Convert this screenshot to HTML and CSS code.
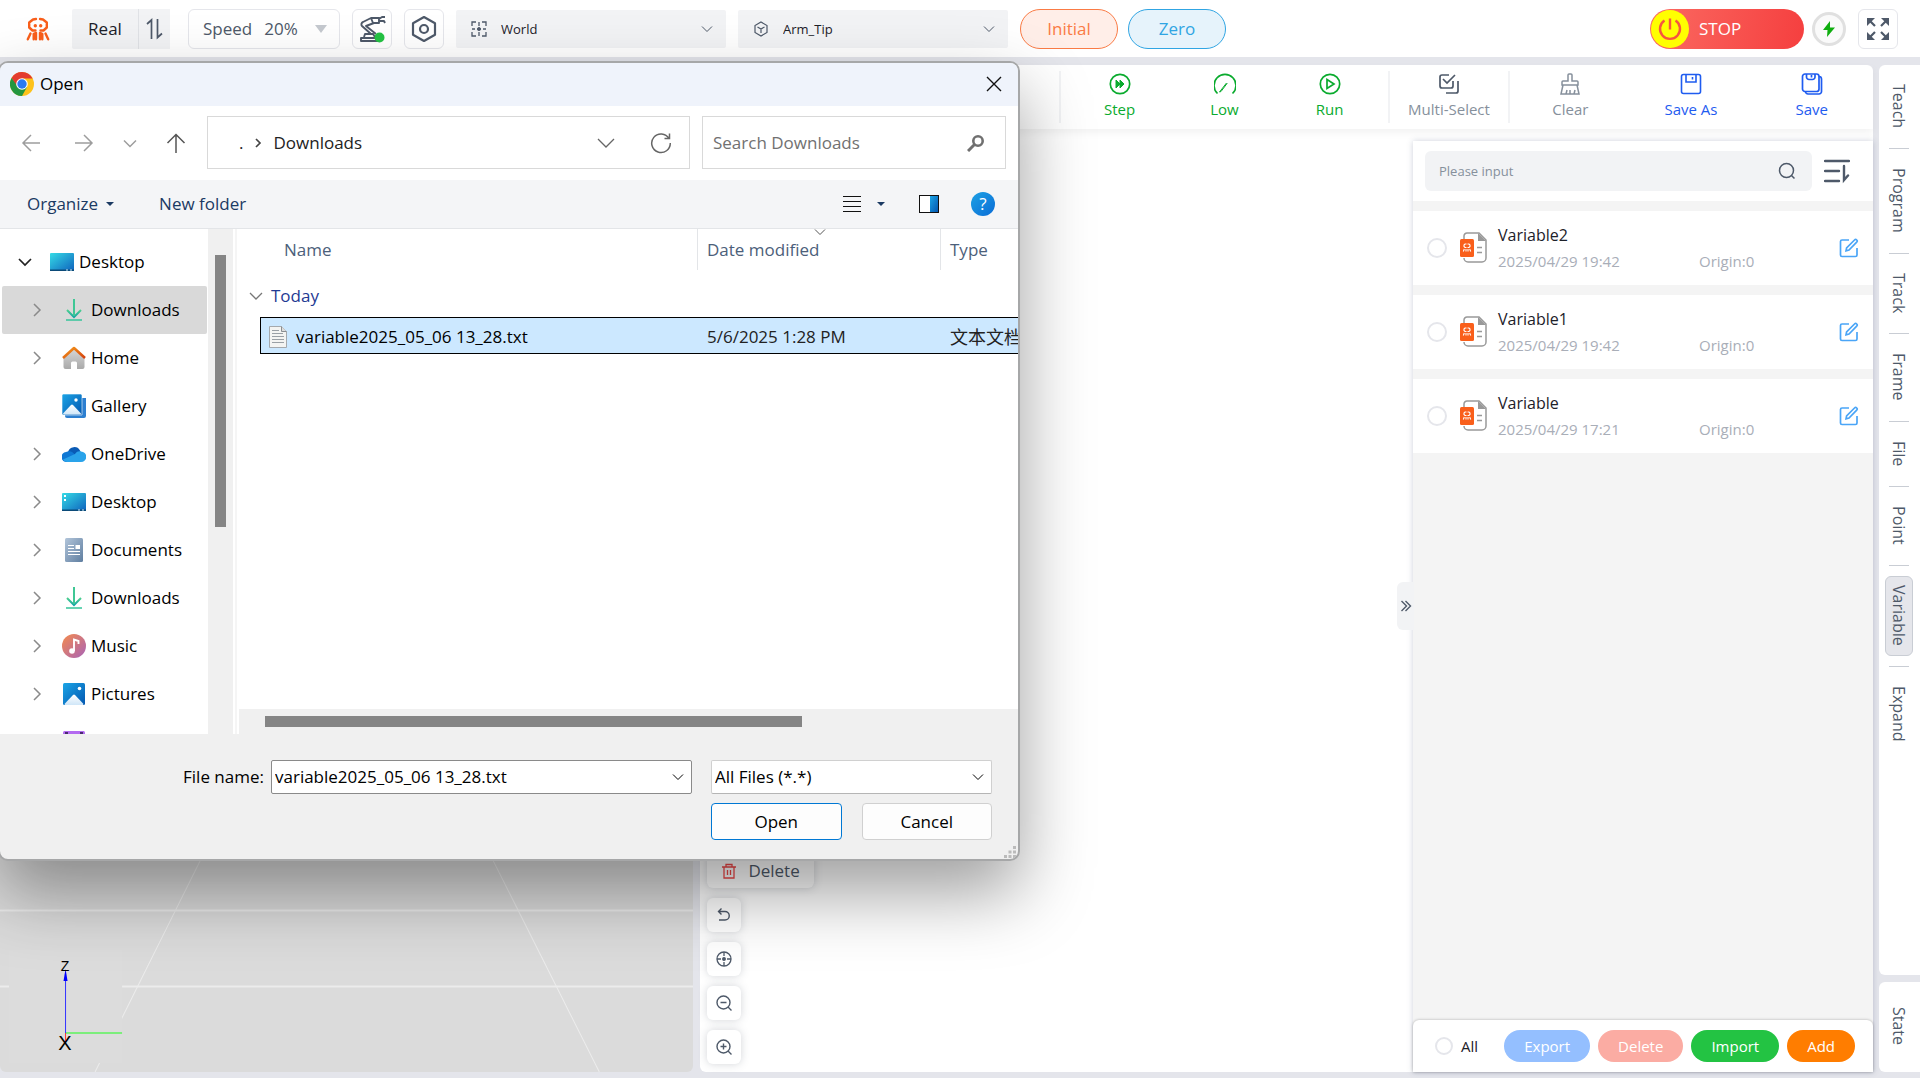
FILE: index.html
```html
<!DOCTYPE html>
<html lang="en">
<head>
<meta charset="utf-8">
<title>Robot Studio</title>
<link rel="stylesheet" href="styles.css">
</head>
<body>
<svg class="defs" aria-hidden="true">
  <defs>
    <linearGradient id="g-desk" x1="0" y1="0" x2="1" y2="1"><stop offset="0" stop-color="#35dbe6"/><stop offset="1" stop-color="#0f62bd"/></linearGradient>
    <linearGradient id="g-down" x1="0" y1="0" x2="0" y2="1"><stop offset="0" stop-color="#4fd08f"/><stop offset="1" stop-color="#12a5a5"/></linearGradient>
    <linearGradient id="g-roof" x1="0" y1="0" x2="1" y2="1"><stop offset="0" stop-color="#f59a1b"/><stop offset="1" stop-color="#d4400e"/></linearGradient>
    <linearGradient id="g-wall" x1="0" y1="0" x2="0" y2="1"><stop offset="0" stop-color="#d8d8d8"/><stop offset="1" stop-color="#a9a9a9"/></linearGradient>
    <linearGradient id="g-pic" x1="0" y1="0" x2="1" y2="1"><stop offset="0" stop-color="#1ba5e6"/><stop offset="1" stop-color="#0356b0"/></linearGradient>
    <linearGradient id="g-hill" x1="0" y1="0" x2="0" y2="1"><stop offset="0" stop-color="#ffffff"/><stop offset="1" stop-color="#cfe6f8"/></linearGradient>
    <linearGradient id="g-doc" x1="0" y1="0" x2="1" y2="1"><stop offset="0" stop-color="#b2c5da"/><stop offset="1" stop-color="#5f7ea0"/></linearGradient>
    <linearGradient id="g-music" x1="0" y1="0" x2="1" y2="1"><stop offset="0" stop-color="#f58b4c"/><stop offset="1" stop-color="#a863b8"/></linearGradient>
  </defs>
  <symbol id="i-down" viewBox="0 0 14 14"><path d="M2 4.500l5 5 5-5" fill="none" stroke="currentColor"/></symbol>
  <symbol id="i-right" viewBox="0 0 10 16"><path d="M2 2l6 6-6 6" fill="none" stroke="currentColor" stroke-width="1.500"/></symbol>
  <symbol id="i-logo" viewBox="0 0 24 24">
    <g fill="none" stroke="currentColor" stroke-width="2.400" stroke-linecap="round" stroke-linejoin="round">
      <path d="M10 2L7 2.500 3.200 5.500V10.500L6.500 13.500H9.500"/><path d="M14 2L17 2.500 20.800 5.500V10.500L17.500 13.500H14.500"/>
      <path d="M4.500 16.500L1.800 22.300M19.500 16.500L22.200 22.300M7.700 22.300V16.800L10 16V22.300M16.300 22.300V16.800L14 16V22.300"/>
    </g><circle cx="9.300" cy="8.800" r="1.700" fill="currentColor"/><circle cx="14.700" cy="8.800" r="1.700" fill="currentColor"/>
  </symbol>
  <symbol id="i-download" viewBox="0 0 24 24"><path d="M5 12l7 7 7-7" fill="none" stroke="url(#g-down)" stroke-width="2"/><rect x="11" y="1" width="2" height="17" fill="#3fc795"/><path d="M4 22h16" stroke="#35c49a" stroke-width="1.500"/></symbol>
  <symbol id="i-file" viewBox="0 0 28 32">
    <path d="M4 8V4a3 3 0 0 1 3-3h12l7 7v18a4 4 0 0 1-4 4H8a4 4 0 0 1-4-4" fill="#fff" stroke="#999" stroke-width="1.500"/>
    <path d="M18 1l8 8h-8z" fill="#999"/><path d="M17 15.500h5M17 20.500h5" stroke="#999" stroke-width="1.500"/>
    <rect x="0" y="7" width="14" height="18" rx="1.500" fill="#f95f1b"/>
    <g fill="none" stroke="#fff" stroke-width="1.100"><path d="M6.500 12H5l-1 1v1.500l1 1h1.500M7.500 12H9l1 1v1.500l-1 1H7.500M3.300 19.500l1-2.500M10.700 19.500l-1-2.500M6 19.500V17M8 19.500V17"/></g>
  </symbol>
  <symbol id="i-edit" viewBox="0 0 20 20"><path d="M10 2H3a1.500 1.500 0 0 0-1.500 1.500V17A1.500 1.500 0 0 0 3 18.500h13.500A1.500 1.500 0 0 0 18 17v-7M7 12.800l.6-3L15.500 2a1.500 1.500 0 0 1 2.200 2.200L10 12z" fill="none" stroke="#4aa5f7" stroke-width="1.700"/></symbol>
</svg>

<div class="app">
  <header class="topbar">
    <svg class="logo"><use href="#i-logo"/></svg>
    <div class="mode">
      <button class="mode-name" type="button">Real</button>
      <button class="mode-swap" type="button" aria-label="Switch mode"><svg width="18" height="22" viewBox="0 0 18 22" fill="none" stroke="#4e5969" stroke-width="1.700"><path d="M5.500 21V2L1 6M11.500 1v18.500L16 15.500"/></svg></button>
    </div>
    <div class="speed">
      <label for="speed">Speed</label>
      <select id="speed"><option>20%</option></select>
      <svg width="12" height="8" viewBox="0 0 12 8"><path d="M0 0h12L6 8z" fill="#c5c9cf"/></svg>
    </div>
    <button class="icon-btn" type="button" aria-label="Robot arm">
      <svg width="28" height="28" viewBox="0 0 28 28" fill="none" stroke="#4e5969" stroke-width="1.900" stroke-linejoin="round"><path d="M3 26v-3h19v3zM6 22l1-3h8l2 3M13 19L4 11a2.500 2.500 0 0 1 1-4L13 3h8v5h-5L8 11l10 8M21 4l3-2h3M21 6h5l1 2M13 3l2 5"/><circle cx="21.500" cy="22.500" r="5" fill="#23c343" stroke="none"/></svg>
    </button>
    <button class="icon-btn" type="button" aria-label="Settings">
      <svg width="28" height="28" viewBox="0 0 28 28" fill="none" stroke="#4e5969" stroke-width="2.200" stroke-linejoin="round"><path d="M14 2l11 6.200v11.600L14 26 3 19.800V8.200z"/><circle cx="14" cy="14" r="4"/></svg>
    </button>
    <label class="pick">
      <svg width="16" height="16" viewBox="0 0 16 16" fill="none" stroke="#4e5969" stroke-width="1.300"><path d="M1 5V1h4M11 1h4v4M15 11v4h-4M5 15H1v-4M8 1v4M8 11v4M1 8h3M12 8h3M6 8h4M8 6v4"/><circle cx="8" cy="8" r="1.200" fill="#4e5969"/></svg>
      <select aria-label="Coordinate frame"><option>World</option></select>
      <svg class="chev" width="14" height="14"><use href="#i-down"/></svg>
    </label>
    <label class="pick">
      <svg width="16" height="16" viewBox="0 0 16 16" fill="none" stroke="#4e5969" stroke-width="1.200"><path d="M8 1l6 3.500v7L8 15l-6-3.500v-7zM4.500 6L8 8l3.500-2M8 8v4"/></svg>
      <select aria-label="Tool"><option>Arm_Tip</option></select>
      <svg class="chev" width="14" height="14"><use href="#i-down"/></svg>
    </label>
    <button class="pill pill-initial" type="button">Initial</button>
    <button class="pill pill-zero" type="button">Zero</button>
    <button class="stop" type="button">
      <svg width="38" height="38" viewBox="0 0 38 38"><circle cx="19" cy="19" r="19" fill="#ff0"/><path d="M13.500 10.500a10 10 0 1 0 11 0M19 8.500v11" fill="none" stroke="#f7553f" stroke-width="2.400"/></svg>
      STOP
    </button>
    <button class="power" type="button" aria-label="Power"><svg width="14" height="16" viewBox="0 0 14 16"><path d="M8 0L1 9h4.500L5 16l8-9.500H8z" fill="#0fae0f"/></svg></button>
    <button class="icon-btn" type="button" aria-label="Full screen">
      <svg width="24" height="24" viewBox="0 0 24 24" fill="#4e5969" stroke="#4e5969" stroke-width="2.200"><path d="M3 3l6 6M21 3l-6 6M3 21l6-6M21 21l-6-6"/><path stroke="none" d="M1 1h8L1 9zM23 1v8l-8-8zM1 23v-8l8 8zM23 23h-8l8-8z"/></svg>
    </button>
  </header>

  <main class="work">
    <section class="viewer" aria-label="3D view">
      <svg class="scene" viewBox="0 0 693 1007" preserveAspectRatio="xMinYMax slice">
        <g stroke="#ececec" fill="none"><path d="M0 845.500H693M0 921.500H693" stroke-width="2"/><path d="M201 794L95 1007M492 794L599 1007"/></g>
        <rect x="9" y="885" width="113" height="113" fill="#dcdcdc"/>
        <path d="M65 968H122" stroke="#7cee7c" stroke-width="2"/><path d="M65.500 968v9" stroke="#f33"/><path d="M65.500 908v60" stroke="#33f"/><path d="M65.500 904l2 12h-4z" fill="#00f"/>
        <text x="65" y="906" class="axis-z">Z</text><text x="65" y="985" class="axis-x">X</text>
      </svg>
    </section>

    <section class="editor">
      <nav class="toolbar" aria-label="Program actions">
        <div class="tools tools-run">
          <button class="tool green" type="button"><svg viewBox="0 0 22 22"><circle cx="11" cy="11" r="9.700" fill="none" stroke="currentColor" stroke-width="1.700"/><path d="M7 7l4 4-4 4zM11 7l4 4-4 4z" fill="currentColor" stroke="currentColor"/></svg>Step</button>
          <button class="tool green" type="button"><svg viewBox="0 0 22 22" fill="none" stroke="currentColor" stroke-width="1.700"><path d="M3.500 20.500a11 11 0 1 1 15 0"/><path d="M5.500 19l7-9 .5.500-6 8z" stroke-width="1"/></svg>Low</button>
          <button class="tool green" type="button"><svg viewBox="0 0 22 22" fill="none" stroke="currentColor" stroke-width="1.700"><circle cx="11" cy="11" r="9.700"/><path d="M8 6.500l7 4.500-7 4.500z"/></svg>Run</button>
        </div>
        <div class="tools tools-select">
          <button class="tool gray" type="button"><svg viewBox="0 0 22 22" fill="none" stroke="#4e5969" stroke-width="1.700"><path d="M11 2H4a2 2 0 0 0-2 2v9a2 2 0 0 0 2 2h9a2 2 0 0 0 2-2V8M5 6l4 4 8-8M20 8v10a2 2 0 0 1-2 2H8"/></svg>Multi-Select</button>
        </div>
        <div class="tools tools-save">
          <button class="tool gray" type="button"><svg viewBox="0 0 22 22" fill="none" stroke="#86909c" stroke-width="1.500"><path d="M9 8V2a1 1 0 0 1 1-1h2a1 1 0 0 1 1 1v6h5a1 1 0 0 1 1 1v3H3V9a1 1 0 0 1 1-1zM4 12L2 21h18l-2-9M7 21l1-4M11 21v-4M15 21l1-4"/></svg>Clear</button>
          <button class="tool blue" type="button"><svg viewBox="0 0 22 22" fill="none" stroke="currentColor" stroke-width="1.600"><rect x="1.500" y="1.500" width="19" height="19" rx="2"/><path d="M6 1.500V9h10V1.500M12.500 4v2.500"/></svg>Save As</button>
          <button class="tool blue" type="button"><svg viewBox="0 0 22 22" fill="none" stroke="currentColor" stroke-width="1.700"><rect x="1.500" y="1" width="16.500" height="17.500" rx="2.500"/><path d="M5.500 1v3a2.500 2.500 0 0 0 2.500 2.500h3.500A2.500 2.500 0 0 0 14 4V1M10.500 2v2.500M18 3.500a2.500 2.500 0 0 1 2.500 2.500v12.500A2.500 2.500 0 0 1 18 21H7a2.500 2.500 0 0 1-2.500-2.500"/></svg>Save</button>
        </div>
      </nav>
      <div class="editor-body">
        <div class="canvas">
          <button class="float float-delete" type="button"><svg width="16" height="16" viewBox="0 0 16 16" fill="none" stroke="#f04848" stroke-width="1.300"><path d="M1 4h14M5 4V1.500h6V4M3 4v11h10V4M6.500 7v5M9.500 7v5"/></svg>Delete</button>
          <button class="float" type="button" aria-label="Undo"><svg width="16" height="16" viewBox="0 0 16 16" fill="none" stroke="#4e5969" stroke-width="1.400"><path d="M3 13h6a4 4 0 0 0 0-8.500H2.500M5.500 1.500l-3 3 3 3"/></svg></button>
          <button class="float" type="button" aria-label="Centre"><svg width="16" height="16" viewBox="0 0 16 16" fill="none" stroke="#4e5969" stroke-width="1.300"><circle cx="8" cy="8" r="7"/><circle cx="8" cy="8" r="1.300" fill="#4e5969"/><path d="M8 1v4M8 11v4M1 8h4M11 8h4"/></svg></button>
          <button class="float" type="button" aria-label="Zoom out"><svg width="16" height="16" viewBox="0 0 16 16" fill="none" stroke="#4e5969" stroke-width="1.400"><circle cx="7.500" cy="7.500" r="6.500"/><path d="M4.500 7.500h6M12 12l3.500 3.500"/></svg></button>
          <button class="float" type="button" aria-label="Zoom in"><svg width="16" height="16" viewBox="0 0 16 16" fill="none" stroke="#4e5969" stroke-width="1.400"><circle cx="7.500" cy="7.500" r="6.500"/><path d="M4.500 7.500h6M7.500 4.500v6M12 12l3.500 3.500"/></svg></button>
        </div>
        <aside class="panel">
          <button class="collapse" type="button" aria-label="Collapse panel"><svg width="12" height="12" viewBox="0 0 12 12" fill="none" stroke="#4e5969" stroke-width="1.400"><path d="M1.500 1l5 5-5 5M5.500 1l5 5-5 5"/></svg></button>
          <div class="finder">
            <div class="finder-box">
              <input type="text" placeholder="Please input" aria-label="Search variables">
              <svg width="18" height="18" viewBox="0 0 18 18" fill="none" stroke="#4e5969" stroke-width="1.500"><circle cx="8.500" cy="8.500" r="7"/><path d="M13.500 13.500l3 3"/></svg>
            </div>
            <button class="sort" type="button" aria-label="Sort"><svg width="26" height="26" viewBox="0 0 26 26" fill="none" stroke="#4e5969" stroke-width="2.400"><path d="M1 3h24M1 13h14M1 23h14M20 8v14l4-4.500" stroke-linecap="round"/></svg></button>
          </div>
          <ul class="vars">
            <li class="var"><input type="radio" name="var" aria-label="Variable2"><svg class="var-icon"><use href="#i-file"/></svg>
              <div class="var-text"><span class="var-name">Variable2</span><span class="var-meta"><time>2025/04/29 19:42</time><span>Origin:0</span></span></div>
              <button class="edit" type="button" aria-label="Edit"><svg width="20" height="20"><use href="#i-edit"/></svg></button></li>
            <li class="var"><input type="radio" name="var" aria-label="Variable1"><svg class="var-icon"><use href="#i-file"/></svg>
              <div class="var-text"><span class="var-name">Variable1</span><span class="var-meta"><time>2025/04/29 19:42</time><span>Origin:0</span></span></div>
              <button class="edit" type="button" aria-label="Edit"><svg width="20" height="20"><use href="#i-edit"/></svg></button></li>
            <li class="var"><input type="radio" name="var" aria-label="Variable"><svg class="var-icon"><use href="#i-file"/></svg>
              <div class="var-text"><span class="var-name">Variable</span><span class="var-meta"><time>2025/04/29 17:21</time><span>Origin:0</span></span></div>
              <button class="edit" type="button" aria-label="Edit"><svg width="20" height="20"><use href="#i-edit"/></svg></button></li>
          </ul>
          <footer class="panel-foot">
            <label class="all"><input type="checkbox">All</label>
            <button class="act act-export" type="button">Export</button>
            <button class="act act-delete" type="button">Delete</button>
            <button class="act act-import" type="button">Import</button>
            <button class="act act-add" type="button">Add</button>
          </footer>
        </aside>
      </div>
    </section>

    <div class="side">
      <nav class="side-tabs" aria-label="Panels">
        <button class="tab" type="button">Teach</button><hr>
        <button class="tab" type="button">Program</button><hr>
        <button class="tab" type="button">Track</button><hr>
        <button class="tab" type="button">Frame</button><hr>
        <button class="tab" type="button">File</button><hr>
        <button class="tab" type="button">Point</button><hr>
        <button class="tab active" type="button">Variable</button><hr>
        <button class="tab" type="button">Expand</button>
      </nav>
      <div class="side-state"><button class="tab" type="button">State</button></div>
    </div>
  </main>
</div>

<div class="dialog" role="dialog" aria-labelledby="dlg-title">
  <div class="dlg-title">
    <svg width="24" height="24" viewBox="0 0 24 24"><circle cx="12" cy="12" r="12" fill="#fdc21b"/><path d="M12 6.500H22.600A12 12 0 0 0 1.600 6L7 15z" fill="#e33b2e"/><path d="M1.600 6A12 12 0 0 0 12 24l5-9-9 0z" fill="#24963f"/><circle cx="12" cy="12" r="5.800" fill="#fff"/><circle cx="12" cy="12" r="4.700" fill="#2a7af3"/></svg>
    <span id="dlg-title">Open</span>
    <button type="button" aria-label="Close"><svg width="18" height="18" viewBox="0 0 18 18"><path d="M2 2l14 14M16 2L2 16" stroke="#111" stroke-width="1.400"/></svg></button>
  </div>
  <div class="dlg-nav">
    <div class="arrows">
      <button type="button" aria-label="Back"><svg width="20" height="20" viewBox="0 0 20 20" fill="none" stroke="#9d9d9d" stroke-width="1.500"><path d="M19 10H2M10 2l-8 8 8 8"/></svg></button>
      <button type="button" aria-label="Forward"><svg width="20" height="20" viewBox="0 0 20 20" fill="none" stroke="#9d9d9d" stroke-width="1.500"><path d="M1 10h17M10 2l8 8-8 8"/></svg></button>
      <button type="button" aria-label="Recent"><svg width="14" height="14" viewBox="0 0 14 14" fill="none" stroke="#9d9d9d" stroke-width="1.500"><path d="M1 4.500l6 6 6-6"/></svg></button>
      <button type="button" aria-label="Up"><svg width="20" height="20" viewBox="0 0 20 20" fill="none" stroke="#555" stroke-width="1.500"><path d="M10 20V1.500M1.500 10L10 1.500l8.500 8.500"/></svg></button>
    </div>
    <div class="path">
      <span>.</span>
      <svg width="8" height="10" viewBox="0 0 8 10"><path d="M2 1l4 4-4 4" fill="none" stroke="#444" stroke-width="1.700"/></svg>
      <span class="crumb">Downloads</span>
      <button type="button" aria-label="Previous locations"><svg width="18" height="18" viewBox="0 0 18 18" fill="none" stroke="#666" stroke-width="1.300"><path d="M1 5l8 8 8-8"/></svg></button>
      <button type="button" aria-label="Refresh"><svg width="22" height="22" viewBox="0 0 22 22" fill="none" stroke="#666" stroke-width="1.500"><path d="M19 6.500A9.300 9.300 0 1 0 20.300 11M19.500 1.500v5h-5"/></svg></button>
    </div>
    <div class="dlg-search">
      <input type="text" placeholder="Search Downloads" aria-label="Search Downloads">
      <svg width="18" height="18" viewBox="0 0 18 18" fill="none" stroke="#707070"><circle cx="11" cy="7" r="4.700" stroke-width="2.600"/><path d="M7.500 10.500L1 17" stroke-width="3"/></svg>
    </div>
  </div>
  <div class="dlg-tools">
    <button type="button">Organize <svg width="8" height="4" viewBox="0 0 8 4"><path d="M0 0h8L4 4z" fill="#1b3a63"/></svg></button>
    <button type="button">New folder</button>
    <button class="push" type="button" aria-label="View"><svg width="18" height="18" viewBox="0 0 18 18" stroke="#111"><path d="M0 1.500h18M0 6.500h18M0 11.500h18M0 16.500h18"/></svg></button>
    <button type="button" aria-label="More views"><svg width="8" height="4" viewBox="0 0 8 4"><path d="M0 0h8L4 4z" fill="#1b3a63"/></svg></button>
    <button type="button" aria-label="Preview pane"><svg width="20" height="18" viewBox="0 0 20 18"><rect x=".5" y=".5" width="19" height="17" fill="#fff" stroke="#111"/><path d="M11 1h8v16h-8z" fill="url(#g-pic)"/></svg></button>
    <button class="help" type="button" aria-label="Help">?</button>
  </div>
  <div class="dlg-main">
    <ul class="tree">
      <li class="root"><svg class="tw open" viewBox="0 0 14 14"><path d="M1 4l6 6 6-6" fill="none" stroke="#222" stroke-width="1.700"/></svg><svg class="ic" viewBox="0 0 24 24"><rect y="3" width="24" height="18" rx="1" fill="url(#g-desk)"/><path d="M0 19.500h24v1a.5.500 0 0 1-.5.500H.5a.5.500 0 0 1-.5-.5z" fill="#0b4a78"/><path d="M16 20h2M20 20h2" stroke="#cfefff"/></svg>Desktop</li>
      <li class="sel"><svg class="tw"><use href="#i-right"/></svg><svg class="ic"><use href="#i-download"/></svg>Downloads</li>
      <li><svg class="tw"><use href="#i-right"/></svg><svg class="ic" viewBox="0 0 24 24"><path d="M1.500 11L12 2.500 22.500 11v10a2 2 0 0 1-2 2H15v-6a1.500 1.500 0 0 0-1.500-1.500h-3A1.500 1.500 0 0 0 9 17v6H3.500a2 2 0 0 1-2-2z" fill="url(#g-wall)"/><path d="M1 12L12 2l11 10" fill="none" stroke="url(#g-roof)" stroke-width="2.600" stroke-linejoin="round"/></svg>Home</li>
      <li><svg class="tw"></svg><svg class="ic" viewBox="0 0 24 24"><path d="M4 4h20v18a2 2 0 0 1-2 2H5a2 2 0 0 1-2-2z" fill="#2d7fd0"/><path d="M0 1.500A1.500 1.500 0 0 1 1.500 0h17A1.500 1.500 0 0 1 20 1.500V21H1.500A1.500 1.500 0 0 1 0 19.500z" fill="url(#g-pic)" stroke="#fff" stroke-width=".6"/><path d="M1 19.500l8-8.500a1.500 1.500 0 0 1 2 0l8 8.500a1 1 0 0 1-.5 1h-17z" fill="url(#g-hill)"/><circle cx="14" cy="6" r="1.700" fill="#fff"/></svg>Gallery</li>
      <li><svg class="tw"><use href="#i-right"/></svg><svg class="ic" viewBox="0 0 24 24"><path d="M6 10a6.500 6.500 0 0 1 12-1.500L20 13H4z" fill="#0a5bb5"/><path d="M5 20a5 5 0 0 1-1-10c4-2 7 0 9 3l6 6z" fill="#0f78d4"/><path d="M13 12c2-3 4-3 6-2.500A5 5 0 0 1 19 20H5a5 5 0 0 1-4-2.500z" fill="#2aa3ea"/></svg>OneDrive</li>
      <li><svg class="tw"><use href="#i-right"/></svg><svg class="ic" viewBox="0 0 24 24"><rect y="3" width="24" height="18" rx="1" fill="url(#g-desk)"/><path d="M0 19.500h24v1a.5.500 0 0 1-.5.500H.5a.5.500 0 0 1-.5-.5z" fill="#0b4a78"/><path d="M2 5h2v2H2zM2 9h2v2H2z" fill="#fff"/><path d="M16 20h2M20 20h2" stroke="#cfefff"/></svg>Desktop</li>
      <li><svg class="tw"><use href="#i-right"/></svg><svg class="ic" viewBox="0 0 24 24"><rect x="3" width="18" height="24" rx="1.500" fill="url(#g-doc)"/><path d="M6 7.500h6M6 10.500h6M6 13.500h12M6 16.500h12" stroke="#fff" stroke-width="1.200"/><path d="M13.500 7H18v4h-4.500z" fill="#fff"/></svg>Documents</li>
      <li><svg class="tw"><use href="#i-right"/></svg><svg class="ic"><use href="#i-download"/></svg>Downloads</li>
      <li><svg class="tw"><use href="#i-right"/></svg><svg class="ic" viewBox="0 0 24 24"><circle cx="12" cy="12" r="12" fill="url(#g-music)"/><circle cx="10" cy="17" r="2.800" fill="#fff"/><path d="M12 17V5.500l4.500 1.500v3" fill="none" stroke="#fff" stroke-width="1.900"/></svg>Music</li>
      <li><svg class="tw"><use href="#i-right"/></svg><svg class="ic" viewBox="0 0 24 24"><rect x="1" y="1" width="22" height="22" rx="1.500" fill="url(#g-pic)"/><path d="M2.500 22l8.500-9a1.500 1.500 0 0 1 2 0l8.500 9-.5 1H3z" fill="url(#g-hill)"/><circle cx="17.500" cy="6.500" r="1.800" fill="#fff"/></svg>Pictures</li>
      <li><svg class="tw"></svg><svg class="ic" viewBox="0 0 24 24"><rect x="1" y="1" width="22" height="22" rx="1.500" fill="#b36af0"/><path d="M3 2h3v3H3zM18 2h3v3h-3z" fill="#4a2a72"/></svg></li>
    </ul>
    <div class="vscroll"><div class="vthumb"></div></div>
    <div class="files">
      <table>
        <colgroup><col class="c-gap"><col class="c-name"><col class="c-date"><col class="c-type"></colgroup>
        <thead><tr><td></td><th class="h-name">Name</th><th><svg class="sorted" width="14" height="14"><use href="#i-down"/></svg>Date modified</th><th>Type</th></tr></thead>
        <tbody>
          <tr class="group"><th colspan="4"><svg width="14" height="14" viewBox="0 0 14 14"><path d="M1 4l6 6 6-6" fill="none" stroke="#777" stroke-width="1.300"/></svg>Today</th></tr>
          <tr class="file"><td></td><td class="f-name"><div><svg width="18" height="22" viewBox="0 0 18 22"><path d="M.5.500h12l5 5v16H.500z" fill="#f4f4f2" stroke="#a5a9ad"/><path d="M12.500.500v5h5" fill="#ddd" stroke="#8a8e92"/><path d="M3 4.500h7M3 7.500h11M3 10.500h12M3 13.500h12M3 16.500h12" stroke="#9aa0a5"/></svg>variable2025_05_06 13_28.txt</div></td><td>5/6/2025 1:28 PM</td><td class="f-type">文本文档</td></tr>
        </tbody>
      </table>
      <div class="hscroll"><div class="hthumb"></div></div>
    </div>
  </div>
  <div class="dlg-foot">
    <label for="fname">File name:</label>
    <div class="field fname"><input id="fname" type="text" value="variable2025_05_06 13_28.txt"><svg width="14" height="14"><use href="#i-down"/></svg></div>
    <div class="field ftype"><select aria-label="File type"><option>All Files (*.*)</option></select><svg width="14" height="14"><use href="#i-down"/></svg></div>
    <div class="dlg-actions"><button class="primary" type="button">Open</button><button type="button">Cancel</button></div>
    <svg class="grip" width="12" height="12" viewBox="0 0 12 12" fill="#bbb"><path d="M9 0h3v3H9zM9 4.500h3v3H9zM9 9h3v3H9zM4.500 4.500h3v3h-3zM4.500 9h3v3h-3zM0 9h3v3H0z"/></svg>
  </div>
</div>
</body>
</html>
```
FILE: styles.css
```css
* { box-sizing: border-box; }
body {
  margin: 0;
  overflow: hidden;
  background: #e4e5eb;
  color: #1d2129;
  font: 17px/24px "Open Sans", "Noto Sans CJK SC", sans-serif;
}
button, input, select {
  margin: 0;
  padding: 0;
  border: 0;
  background: none;
  color: inherit;
  font: inherit;
}
select { appearance: none; }
svg { display: block; flex: none; }
.defs { position: absolute; width: 0; height: 0; }
.app { display: flex; flex-direction: column; height: 100vh; }

/* top bar */
.topbar {
  display: flex;
  align-items: center;
  height: 57px;
  padding: 1px 22px 0 26px;
  background: #fff;
}
.logo { width: 24px; height: 24px; margin-right: 22px; color: #f95f1b; }
.mode { display: flex; height: 40px; margin-right: 18px; }
.mode button { background: #f2f3f5; }
.mode-name { width: 66px; border-radius: 2px 0 0 2px; }
.mode .mode-swap { display: grid; place-items: center; width: 32px; border-left: 1px solid #e0e2e6; }
.speed {
  display: flex;
  align-items: center;
  width: 152px;
  height: 40px;
  padding: 0 12px 0 14px;
  margin-right: 12px;
  border: 1px solid #e5e6eb;
  border-radius: 6px;
  color: #4e5969;
}
.speed select { width: 52px; margin-left: 12px; }
.icon-btn {
  display: grid;
  place-items: center;
  width: 40px;
  height: 40px;
  margin-right: 12px;
  border: 1px solid #e5e6eb;
  border-radius: 6px;
}
.topbar > :last-child { margin-right: 0; }
.pick {
  display: flex;
  align-items: center;
  width: 270px;
  height: 38px;
  padding: 0 12px 0 15px;
  margin-right: 12px;
  border-radius: 2px;
  background: #f2f3f5;
  font-size: 13px;
}
.pick select { flex: 1; margin-left: 14px; }
.chev { color: #4e5969; }
.pill { width: 98px; height: 40px; margin-right: 10px; border: 1px solid; border-radius: 20px; }
.pill-initial { background: #ffeee8; color: #fa7b45; }
.pill-zero { background: #e6f3fb; color: #30a5e3; }
.stop {
  display: flex;
  align-items: center;
  gap: 10px;
  width: 154px;
  height: 40px;
  padding: 1px;
  margin: 0 8px 0 auto;
  border-radius: 20px;
  background: linear-gradient(100deg, #fb6a62, #f53f3f);
  color: #fff;
}
.power {
  display: grid;
  place-items: center;
  width: 34px;
  height: 34px;
  margin-right: 12px;
  border: 3px solid #e0e0e0;
  border-radius: 50%;
  background: #fafafa;
}

/* work area */
.work { display: flex; flex: 1; min-height: 0; gap: 7px; padding: 8px 0 6px; }
.viewer { flex: 693 1 0; min-width: 0; overflow: hidden; border-radius: 0 6px 6px 6px; background: #dbdbdb; }
.scene { width: 100%; height: 100%; font-family: "Liberation Sans", sans-serif; }
.axis-z, .axis-x { text-anchor: middle; }
.axis-z { font-size: 14px; }
.axis-x { font-size: 20px; }
.editor { display: flex; flex: 1172 1 0; flex-direction: column; min-width: 0; border-radius: 6px; background: #fff; }
.toolbar {
  display: flex;
  justify-content: flex-end;
  align-items: center;
  height: 64px;
  padding-right: 1px;
  box-shadow: 0 4px 8px rgba(0, 0, 0, .05);
}
.tools { display: flex; height: 52px; border-left: 2px solid #f2f3f5; }
.tools-run { width: 329px; padding: 0 6px; }
.tools-select { width: 120px; }
.tools-save { width: 364px; }
.tool {
  display: flex;
  flex: 1;
  flex-direction: column;
  align-items: center;
  gap: 2px;
  padding-top: 2px;
  font-size: 15px;
  white-space: nowrap;
}
.tool svg { width: 22px; height: 22px; }
.green { color: #0aab2e; }
.gray { color: #86909c; }
.blue { color: #1f5cf0; }
.editor-body { display: flex; flex: 1; min-height: 0; }
.canvas {
  display: flex;
  flex: 1;
  flex-direction: column;
  justify-content: flex-end;
  align-items: flex-start;
  gap: 10px;
  padding: 0 0 8px 7px;
}
.float {
  display: grid;
  place-items: center;
  width: 34px;
  height: 34px;
  border-radius: 6px;
  background: #fff;
  box-shadow: 0 0 8px rgba(78, 89, 105, .25);
}
.float-delete { display: flex; align-items: center; gap: 11px; width: auto; padding: 0 14px; color: #4e5969; }

/* variable panel */
.panel {
  position: relative;
  display: flex;
  flex-direction: column;
  width: 460px;
  margin-top: 12px;
  background: #f4f4f4;
  box-shadow: 0 0 6px rgba(60, 70, 110, .25);
}
.collapse {
  position: absolute;
  left: -16px;
  top: 441px;
  display: grid;
  place-items: center;
  width: 17px;
  height: 48px;
  border-radius: 6px 0 0 6px;
  background: #f2f3f5;
}
.finder { display: flex; align-items: center; gap: 12px; height: 60px; padding: 0 23px 0 12px; background: #fff; }
.finder-box {
  display: flex;
  flex: 1;
  align-items: center;
  height: 40px;
  padding: 0 16px 0 14px;
  border-radius: 6px;
  background: #f2f3f5;
  font-size: 13px;
}
.finder-box input { flex: 1; min-width: 0; }
.finder-box input::placeholder { color: #86909c; opacity: 1; }
.vars { display: flex; flex: 1; flex-direction: column; gap: 10px; margin: 10px 0 0; padding: 0; list-style: none; }
.var { display: flex; align-items: center; height: 74px; padding: 0 14px; background: #fff; }
input[type="radio"], input[type="checkbox"] {
  appearance: none;
  width: 20px;
  height: 20px;
  border: 2px solid #e5e6eb;
  border-radius: 50%;
}
.var-icon { width: 28px; height: 32px; margin: 0 10px 0 13px; }
.var-text { display: flex; flex: 1; flex-direction: column; gap: 2px; }
.var-name { font-size: 16px; }
.var-meta { display: grid; grid-template-columns: 201px 1fr; color: #a9aeb8; font-size: 15px; }
.panel-foot {
  display: flex;
  align-items: center;
  gap: 8px;
  height: 52px;
  padding: 0 18px 0 22px;
  border-radius: 6px 6px 0 0;
  background: #fff;
  box-shadow: 0 0 3px rgba(0, 0, 0, .3);
  font-size: 15px;
}
.all { display: flex; flex: 1; align-items: center; gap: 8px; }
.all input { width: 18px; height: 18px; }
.act { height: 32px; padding: 0 20px; border-radius: 16px; color: #fff; }
.act-export { background: #94bfff; }
.act-delete { background: #fbaca3; }
.act-import { background: #23c343; }
.act-add { background: #ff7d00; }

/* side tabs */
.side { display: flex; flex: none; flex-direction: column; gap: 7px; width: 41px; margin-left: -1px; }
.side-tabs, .side-state {
  display: flex;
  flex-direction: column;
  align-items: center;
  padding-right: 2px;
  border-radius: 6px 0 0 6px;
  background: #fff;
}
.side-tabs { flex: 1; }
.side-state { height: 90px; justify-content: center; }
.side hr { width: 20px; margin: 0; border: 0; border-top: 1px solid #c9cdd4; }
.tab {
  width: 28px;
  padding: 8px 0 9px;
  margin: 10px 0;
  border: 1px solid transparent;
  border-radius: 6px;
  color: #4e5969;
  font-size: 16px;
  writing-mode: vertical-rl;
}
.tab.active { border-color: #c9cdd4; background: #e5e6eb; }

/* file dialog */
.dialog {
  position: absolute;
  left: -2px;
  top: 61px;
  width: 1022px;
  overflow: hidden;
  border: 2px solid #a6a7a8;
  border-radius: 10px;
  background: #f0f0f0;
  color: #000;
  box-shadow: 0 32px 70px rgba(0, 0, 0, .38);
}
.dlg-title { display: flex; align-items: center; gap: 6px; height: 43px; padding: 0 15px 2px 10px; background: #eff3fb; }
.dlg-title button { margin-left: auto; }
.dlg-nav { display: flex; align-items: center; height: 74px; padding: 0 12px 1px 21px; background: #fff; }
.arrows { display: flex; align-items: center; width: 186px; }
.arrows button { margin-right: 33px; }
.arrows button:nth-child(2) { margin-right: 29px; }
.arrows button:nth-child(3) { margin-right: 29px; }
.arrows button:last-child { margin-right: 0; }
.path, .dlg-search { display: flex; align-items: center; height: 53px; border: 1px solid #d9d9d9; }
.path { flex: 1; gap: 11px; padding: 0 17px 0 31px; color: #222; }
.path button:nth-of-type(2) { margin-left: 24px; }
.crumb { flex: 1; }
.dlg-search { width: 304px; margin-left: 12px; padding: 0 20px 0 10px; }
.dlg-search input { flex: 1; min-width: 0; }
.dlg-search input::placeholder { color: #717171; opacity: 1; }
.dlg-tools {
  display: flex;
  align-items: center;
  height: 49px;
  padding: 0 23px 0 27px;
  border-bottom: 1px solid #e3e5e8;
  background: #f4f5f7;
  color: #1b3a63;
}
.dlg-tools button { display: flex; align-items: center; gap: 8px; margin-right: 45px; }
.dlg-tools .push { margin: 0 16px 0 auto; }
.dlg-tools .push + button { margin-right: 34px; }
.dlg-tools .push + button + button { margin-right: 32px; }
.dlg-tools .help {
  justify-content: center;
  width: 24px;
  height: 24px;
  margin: 0;
  border-radius: 50%;
  background: linear-gradient(135deg, #1da1e4, #0a6cd6);
  color: #fff;
}
.dlg-main { display: flex; height: 505px; background: #fff; }
.tree { width: 208px; margin: 0; padding: 9px 1px 0 2px; overflow: hidden; list-style: none; }
.tree li { display: flex; align-items: center; height: 48px; padding-left: 30px; border-radius: 2px; }
.tree .root { padding-left: 16px; }
.tree .sel { background: #d9d9d9; }
.tw { width: 10px; height: 16px; margin-right: 20px; color: #8a8a8a; }
.tw.open { width: 14px; height: 14px; margin-right: 18px; }
.ic { width: 24px; height: 24px; margin-right: 5px; }
.vscroll { width: 25px; padding: 26px 7px 0; background: #f0f0f0; }
.vthumb { width: 11px; height: 272px; background: #858585; }
.files {
  display: flex;
  flex: 1;
  flex-direction: column;
  justify-content: space-between;
  min-width: 0;
  margin-left: 2px;
  overflow: hidden;
  border-left: 2px solid #f5f5f5;
}
.files table { width: 900px; margin-left: 2px; border-spacing: 0; table-layout: fixed; }
.c-gap { width: 21px; }
.c-name { width: 437px; }
.c-date { width: 243px; }
.files td, .files th { padding: 0 0 0 9px; text-align: left; font-weight: 400; white-space: nowrap; }
.files thead th { position: relative; height: 41px; border-left: 1px solid #e3e5e8; color: #4c607a; }
.files thead .h-name { padding-left: 24px; border: 0; }
.sorted { position: absolute; left: 115px; top: -4px; color: #555; }
.files .group th { height: 47px; padding: 5px 0 0 10px; color: #1f3a93; }
.group svg { display: inline-block; margin-right: 8px; vertical-align: -1px; }
.files .file td { height: 37px; padding: 2px 0 0 10px; border: solid #000; border-width: 1px 0; background: #cce8ff; color: #222; }
.files .file td:first-child { border: 0; background: none; }
.files .file .f-name { padding-left: 8px; border-left-width: 1px; color: #000; }
.f-name div { display: flex; align-items: center; gap: 9px; }
.file .f-type { font-size: 18px; }
.hscroll { height: 25px; margin-left: 2px; padding: 7px 0 7px 26px; background: #f0f0f0; }
.hthumb { width: 537px; height: 11px; background: #858585; }
.dlg-foot {
  position: relative;
  display: grid;
  grid-template-columns: 1fr 421px 281px;
  column-gap: 19px;
  row-gap: 9px;
  align-items: center;
  padding: 26px 26px 19px 0;
}
.dlg-foot label { margin-right: -12px; text-align: right; }
.field { display: flex; align-items: center; height: 34px; padding: 0 6px 0 3px; border: 1px solid #8a8a8a; border-radius: 2px; background: #fff; }
.field input, .field select { flex: 1; min-width: 0; }
.ftype { border-color: #d0d0d0; border-bottom-color: #b5b5b5; }
.dlg-actions { display: flex; grid-column: 3; gap: 20px; }
.dlg-actions button { flex: 1; height: 37px; border: 1px solid #d0d0d0; border-radius: 4px; background: #fdfdfd; }
.dlg-actions .primary { border-color: #0078d4; }
.grip { position: absolute; right: 2px; bottom: 1px; }
```
